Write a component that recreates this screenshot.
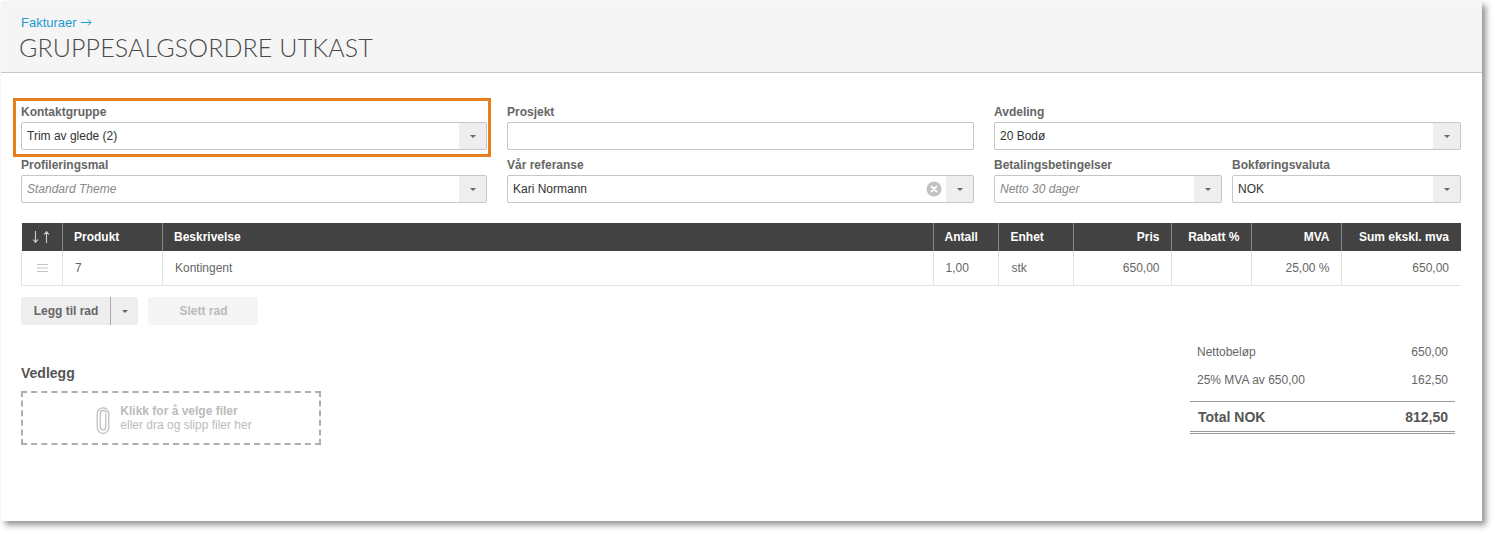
<div class="shell">
<div class="page">
  <header class="head">
    <a class="crumb" href="#top">Fakturaer <svg width="11" height="9" viewBox="0 0 11 9" fill="none" stroke="#1b9bd1" stroke-width="1"><path d="M0 4.500h10M7 1.500l3 3-3 3"/></svg></a>
    <h1>GRUPPESALGSORDRE UTKAST</h1>
  </header>

  <main class="body">
    <section class="form">
      <div class="field highlighted">
        <span class="lbl">Kontaktgruppe</span>
        <div class="sel"><span class="val">Trim av glede (2)</span><span class="arrow"><i></i></span></div>
      </div>
      <div class="field">
        <span class="lbl">Prosjekt</span>
        <div class="sel"><span class="val"></span></div>
      </div>
      <div class="field">
        <span class="lbl">Avdeling</span>
        <div class="sel"><span class="val">20 Bodø</span><span class="arrow"><i></i></span></div>
      </div>
      <div class="field">
        <span class="lbl">Profileringsmal</span>
        <div class="sel"><span class="val ph">Standard Theme</span><span class="arrow"><i></i></span></div>
      </div>
      <div class="field">
        <span class="lbl">Vår referanse</span>
        <div class="sel">
          <span class="val">Kari Normann</span>
          <svg class="clear" width="16" height="16" viewBox="0 0 16 16"><circle cx="8" cy="8" r="7.500" fill="#c2c2c2"/><path d="M5.500 5.500l5 5M10.500 5.500l-5 5" stroke="#fff" stroke-width="1.800" stroke-linecap="round"/></svg>
          <span class="arrow"><i></i></span>
        </div>
      </div>
      <div class="split">
        <div class="field">
          <span class="lbl">Betalingsbetingelser</span>
          <div class="sel"><span class="val ph">Netto 30 dager</span><span class="arrow"><i></i></span></div>
        </div>
        <div class="field">
          <span class="lbl">Bokføringsvaluta</span>
          <div class="sel"><span class="val">NOK</span><span class="arrow"><i></i></span></div>
        </div>
      </div>
    </section>

    <table>
      <colgroup>
        <col class="c1" /><col class="c2" /><col /><col class="c4" /><col class="c5" /><col class="c6" /><col class="c7" /><col class="c8" /><col class="c9" />
      </colgroup>
      <thead>
        <tr>
          <th class="sort"><svg width="18" height="12" viewBox="0 0 18 12" fill="none" stroke="#cfcfcf" stroke-width="1.100"><path d="M3.500 0v11M1 8.500l2.500 2.800L6 8.500M14.500 12V1M12 3.500l2.500-2.800L17 3.500"/></svg></th>
          <th>Produkt</th><th>Beskrivelse</th><th>Antall</th><th class="unit">Enhet</th>
          <th class="r">Pris</th><th class="r">Rabatt %</th><th class="r">MVA</th><th class="r end">Sum ekskl. mva</th>
        </tr>
      </thead>
      <tbody>
        <tr>
          <td class="drag"><svg width="11" height="8" viewBox="0 0 11 8"><path d="M0 .5h11M0 4h11M0 7.500h11" stroke="#c4c4c4" stroke-width="1"/></svg></td>
          <td>7</td><td>Kontingent</td><td>1,00</td><td class="unit">stk</td>
          <td class="r">650,00</td><td class="r"></td><td class="r">25,00 %</td><td class="r end">650,00</td>
        </tr>
      </tbody>
    </table>

    <div class="actions">
      <div class="btn-group">
        <button class="btn main">Legg til rad</button>
        <button class="btn caret"><i></i></button>
      </div>
      <button class="btn off">Slett rad</button>
    </div>

    <section class="bottom">
      <div class="attach">
        <h2>Vedlegg</h2>
        <div class="drop">
          <svg class="clip" width="14" height="27" viewBox="0 0 14 27" fill="none" stroke="#bcbcbc" stroke-width="1.200"><path d="M9.800 7v13a2.800 2.800 0 0 1-5.600 0V6.500a3 3 0 0 1 6-.2M12.800 7v13.500a5.800 5.800 0 0 1-11.600 0V6.500a5.800 5.800 0 0 1 11.600 .5"/></svg>
          <div class="drop-text"><b>Klikk for å velge filer</b><span>eller dra og slipp filer her</span></div>
        </div>
      </div>
      <div class="totals">
        <div class="t-row"><span>Nettobeløp</span><span>650,00</span></div>
        <div class="t-row"><span>25% MVA av 650,00</span><span>162,50</span></div>
        <div class="t-total"><span>Total NOK</span><span>812,50</span></div>
      </div>
    </section>
  </main>
</div>
</div>

<style>
  :global(body) { margin: 0; background: #fff; }
  .shell { height: 534px; padding: 1px 0 0 1px; box-sizing: border-box; overflow: hidden; }
  .page {
    width: 1481px; height: 520px; background: #fff;
    box-shadow: 4px 4px 6px rgba(0,0,0,.42);
    font-family: "Liberation Sans", Arial, sans-serif; font-size: 12px; color: #555;
  }
  .head { height: 72px; box-sizing: border-box; background: #f5f5f5; border-bottom: 1px solid #c8c8c8; padding: 14px 18px 0; }
  .crumb { display: block; color: #1b9bd1; font-size: 13px; line-height: 15px; text-decoration: none; padding-left: 2px; }
  .crumb svg { margin-left: 1px; }
  h1 { margin: 3px 0 0; font: 300 25px/29px Lato, sans-serif; color: #4a4a4a; letter-spacing: .12px; white-space: nowrap; }
  .body { padding: 32px 21px 0 20px; width: 1440px; }
  .form { display: grid; grid-template-columns: 466px 467px 467px; gap: 8px 20px; }
  .field { display: flex; flex-direction: column; min-width: 0; }
  .lbl { font-size: 12px; font-weight: 700; line-height: 15px; color: #666; margin-bottom: 2px; }
  .sel { height: 28px; box-sizing: border-box; border: 1px solid #c6c6c6; border-radius: 2px; background: #fff; display: flex; align-items: center; }
  .val { flex: 1; padding-left: 5px; color: #333; font-size: 12px; white-space: nowrap; }
  .ph { color: #888; font-style: italic; }
  .arrow { width: 27px; height: 26px; background: #eee; display: flex; align-items: center; justify-content: center; }
  .arrow i, .caret i { width: 0; height: 0; border: 3px solid transparent; border-top-color: #666; border-bottom: 0; display: block; }
  .clear { margin-right: 4px; }
  .split { display: grid; grid-template-columns: 228px 229px; gap: 10px; }
  .highlighted { position: relative; }
  .highlighted::after { content: ""; position: absolute; left: -8px; right: -4px; top: -7px; bottom: -7px; border: 3px solid #e87e1e; pointer-events: none; }
  table { width: 100%; margin-top: 20px; border-collapse: collapse; table-layout: fixed; }
  .c1 { width: 41px; } .c2 { width: 100px; } .c4 { width: 65px; } .c5 { width: 75px; } .c6 { width: 98px; } .c7 { width: 80px; } .c8 { width: 90px; } .c9 { width: 120px; }
  th { background: #424242; color: #fff; height: 28px; padding: 0 12px 0 11px; font-size: 12px; font-weight: 700; text-align: left; border-left: 1px solid #888; white-space: nowrap; }
  th:first-child { border-left: 0; }
  td { height: 34px; padding: 0 12px; font-size: 12px; color: #666; border-left: 1px solid #e2e2e2; border-bottom: 1px solid #e2e2e2; }
  th.r, td.r { text-align: right; padding-right: 11px; }
  th.end, td.end { padding-right: 12px; }
  th.unit { padding-left: 12px; }
  td.unit { padding-left: 13px; }
  th.sort { padding: 0 0 0 10px; }
  .sort svg { display: block; }
  .drag { padding: 0; text-align: center; }
  .drag svg { display: block; margin: 0 auto; }
  .actions { display: flex; gap: 10px; margin-top: 11px; }
  .btn-group { display: flex; }
  .btn { height: 28px; border: 0; background: #eee; font: 700 12px "Liberation Sans", Arial, sans-serif; color: #666; padding: 0; border-radius: 2px; }
  .main { width: 90px; padding-left: 1px; border-right: 1px solid #aaa; border-radius: 2px 0 0 2px; }
  .caret { width: 27px; display: flex; align-items: center; justify-content: center; border-radius: 0 2px 2px 0; }
  .off { width: 110px; padding-left: 1px; background: #f5f5f5; color: #bbb; }
  .bottom { display: flex; justify-content: space-between; align-items: flex-start; }
  .attach { margin-top: 40px; }
  h2 { margin: 0 0 9px; font-size: 14px; font-weight: 700; line-height: 17px; color: #555; }
  .drop { width: 300px; height: 54px; box-sizing: border-box; border: 2px dashed #aeaeae; display: flex; align-items: center; justify-content: center; gap: 10px; padding-left: 6px; }
  .clip { margin-top: 4px; }
  .drop-text { display: flex; flex-direction: column; line-height: 14px; color: #bbb; font-size: 12px; }
  .drop-text b { font-weight: 700; }
  .totals { width: 265px; margin: 13px 6px 0 0; }
  .t-row { height: 28px; display: flex; justify-content: space-between; align-items: center; padding: 0 7px; color: #666; font-size: 12px; }
  .t-total { margin-top: 7px; height: 29px; border-top: 1px solid #999; border-bottom: 3px double #999; display: flex; justify-content: space-between; align-items: center; padding: 0 7px 0 8px; font-size: 14px; font-weight: 700; color: #555; }
</style>
